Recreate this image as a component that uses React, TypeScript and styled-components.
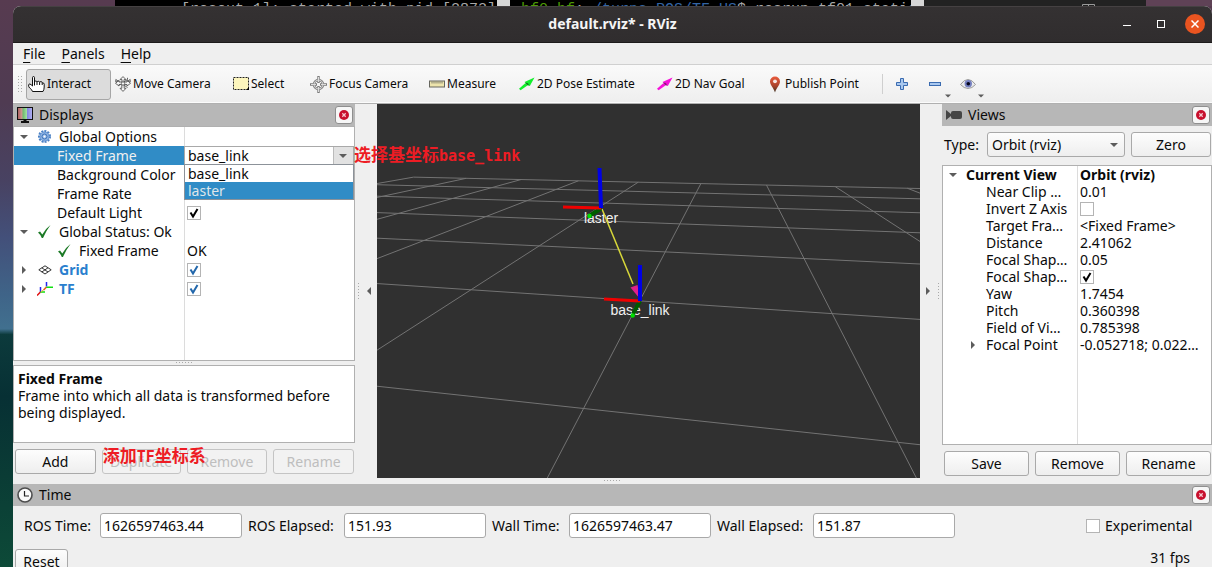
import React from "react";
import styled, { createGlobalStyle, css } from "styled-components";

const colors = {
  panel: "#efefef",
  header: "#b7b7b7",
  line: "#b0b0b0",
  split: "#dcdcdc",
  accent: "#308cc6",
  link: "#2a7fce",
  canvas: "#303030",
};

const GlobalStyle = createGlobalStyle`
  * { box-sizing: border-box; }
  body {
    margin: 0;
    overflow: hidden;
    color: #0a0a0a;
    font: 14px/18px "Noto Sans", "Noto Sans CJK SC", sans-serif;
  }
  button, input, select { font: inherit; color: inherit; }
  svg { display: block; flex: none; }
`;

/* ---------- desktop and window frame ---------- */

const Desktop = styled.div`
  height: 100vh;
  overflow: hidden;
  padding-left: 13px;
  background: linear-gradient(
    180deg,
    #573b50 0%,
    #4f3b52 18%,
    #484262 32%,
    #43507a 42%,
    #3f6488 52%,
    #41708f 58%,
    #0c3a3c 59%,
    #073034 70%,
    #0a3c35 84%,
    #0d4a38 100%
  );
`;

const Backdrop = styled.div`
  display: flex;
  height: 6px;
  padding-right: 66px;
  margin-left: 102px;
  background: linear-gradient(270deg, #5f4256 0 66px, transparent 66px);
`;

const Terminal = styled.div<{ $grow: number; $indent: number }>`
  flex: ${(p) => p.$grow} 1 0;
  min-width: 0;
  text-indent: ${(p) => p.$indent}px;
  overflow: hidden;
  white-space: pre;
  background: #000;
  color: #a8a8a8;
  font: 15px/20px "Liberation Mono", monospace;
`;

const Prompt = styled.span`
  color: #4e9a06;
`;

const Path = styled.span`
  color: #3465a4;
`;

const ScrollTrack = styled.div`
  width: 13px;
  background: #d6d6d6;
`;

const DarkStrip = styled.div`
  width: 222px;
  padding: 4px 0 0 158px;
  background: #222;
`;

const Window = styled.main`
  display: flex;
  flex-direction: column;
  height: calc(100vh + 1px);
  overflow: hidden;
  border-radius: 8px 8px 0 0;
  background: ${colors.panel};
`;

const TitleBar = styled.header`
  display: grid;
  grid-template-columns: 1fr auto 1fr;
  align-items: center;
  height: 37px;
  flex: none;
  background: linear-gradient(#454142 0 1px, #343132 1px, #302d2e);
  border-bottom: 1px solid #1d1b1b;
  color: #f5f5f5;
`;

const Title = styled.h1`
  grid-column: 2;
  margin: 0;
  font-size: 14px;
  font-weight: 700;
`;

const WindowControls = styled.div`
  display: flex;
  justify-content: flex-end;
  align-items: center;
  gap: 14px;
  padding-right: 7px;
`;

const WindowButton = styled.button<{ $close?: boolean }>`
  display: grid;
  place-items: center;
  width: 20px;
  height: 20px;
  padding: 0;
  border: 0;
  border-radius: 50%;
  background: ${(p) => (p.$close ? "#e95420" : "transparent")};
  color: #fff;
`;

const MenuBar = styled.nav`
  display: flex;
  align-items: center;
  gap: 16px;
  height: 22px;
  flex: none;
  padding-left: 10px;
  border-bottom: 1px solid #d0d0d0;
`;

const MenuButton = styled.button`
  padding: 0;
  border: 0;
  background: none;
  u {
    text-underline-offset: 3px;
    text-decoration-thickness: 1px;
  }
`;

const ToolBar = styled.div`
  display: flex;
  align-items: center;
  gap: 2px;
  height: 39px;
  flex: none;
  padding-left: 5px;
  background: linear-gradient(#fafafa, #eeeeee);
  border-bottom: 1px solid ${colors.line};
  box-shadow: inset 0 -1px 0 #fbfbfb;
  font-size: 12px;
`;

const ToolButton = styled.button<{ $width: number; $active?: boolean }>`
  display: flex;
  align-items: center;
  gap: 2px;
  width: ${(p) => p.$width}px;
  height: 31px;
  flex: none;
  padding: 0 0 0 1px;
  border: 1px solid ${(p) => (p.$active ? "#a6a6a6" : "transparent")};
  border-radius: 3px;
  background: ${(p) => (p.$active ? "#dcdcdc" : "transparent")};
  white-space: nowrap;
`;

const GripSlot = styled.div`
  width: 6px;
`;

const ToolDivider = styled.div`
  width: 1px;
  height: 20px;
  margin-right: 7px;
  background: #cfcfcf;
`;

/* ---------- docks ---------- */

const Docks = styled.div`
  display: flex;
  flex: 1;
  min-height: 0;
`;

const Dock = styled.section<{ $width: number }>`
  display: flex;
  flex-direction: column;
  width: ${(p) => p.$width}px;
  flex: none;
`;

const DockHeader = styled.div`
  display: flex;
  align-items: center;
  gap: 6px;
  height: 22px;
  flex: none;
  padding: 0 2px 0 4px;
  background: ${colors.header};
`;

const DockTitle = styled.h2`
  flex: 1;
  margin: 0;
  font-size: 14px;
  font-weight: 400;
`;

const CloseButton = styled.button`
  display: grid;
  place-items: center;
  width: 18px;
  height: 18px;
  padding: 0;
  border: 1px solid #8e8e8e;
  border-radius: 3px;
  background: #f6f6f6;
`;

const Button = styled.button`
  flex: 1 1 0;
  width: 100%;
  min-width: 0;
  height: 25px;
  padding: 0;
  border: 1px solid #a9a9a9;
  border-radius: 3px;
  background: linear-gradient(#fdfdfd, #eeeeee);
  &:disabled {
    border-color: #c4c4c4;
    background: #f2f2f2;
    color: #bebebe;
  }
`;

const ButtonRow = styled.div<{ $bottom: number }>`
  display: flex;
  gap: 6px;
  padding: 6px 1px ${(p) => p.$bottom}px 2px;
`;

const ButtonSlot = styled.div`
  position: relative;
  display: flex;
  flex: 1 1 0;
`;

const Splitter = styled.div<{ $flip?: boolean }>`
  display: flex;
  flex-direction: ${(p) => (p.$flip ? "row-reverse" : "row")};
  align-items: center;
  justify-content: space-between;
  width: 22px;
  flex: none;
  padding: 0 ${(p) => (p.$flip ? 2 : 4)}px 0 ${(p) => (p.$flip ? 4 : 3)}px;
`;

const HandleRow = styled.div<{ $height: number }>`
  display: grid;
  place-items: center;
  height: ${(p) => p.$height}px;
  flex: none;
`;

const TreeBox = styled.div<{ $split: number }>`
  flex: 1;
  min-height: 0;
  border: 1px solid ${colors.line};
  background: linear-gradient(${colors.split}, ${colors.split})
    ${(p) => p.$split}px 0 / 1px 100% no-repeat #fff;
`;

const Tree = styled.table<{ $split: number; $row: number }>`
  width: 100%;
  table-layout: fixed;
  border-collapse: collapse;
  th {
    width: ${(p) => p.$split}px;
    font-weight: inherit;
    text-align: left;
  }
  th, td {
    height: ${(p) => p.$row}px;
    padding: 0;
    white-space: nowrap;
    line-height: 17px;
  }
  td {
    position: relative;
    padding-left: 3px;
  }
`;

const TreeRow = styled.tr<{ $bold?: boolean; $link?: boolean; $selected?: boolean }>`
  ${(p) => p.$bold && css`font-weight: 700;`}
  ${(p) => p.$link && css`color: ${colors.link}; font-weight: 700;`}
  ${(p) => p.$selected && css`th { background: ${colors.accent}; color: #f0f0f0; }`}
`;

const Name = styled.div<{ $indent: number; $gap?: number }>`
  display: flex;
  align-items: center;
  gap: ${(p) => p.$gap ?? 8}px;
  padding-left: ${(p) => p.$indent}px;
`;

const Combo = styled.span`
  position: relative;
  display: flex;
  align-items: center;
  svg {
    position: absolute;
    right: 7px;
    pointer-events: none;
  }
`;

const CellSelect = styled.select`
  appearance: none;
  width: 100%;
  height: 19px;
  padding: 0 20px 0 3px;
  border: 1px solid #a9a9a9;
  border-radius: 0;
  background: linear-gradient(90deg, #bbb, #bbb) right 19px top 0 / 1px 100% no-repeat,
    linear-gradient(#e2e2e2, #e2e2e2) right 0 top 0 / 19px 100% no-repeat, #fff;
  line-height: 17px;
`;

const EditorCell = styled.td`
  &&& { padding: 0; }
`;

const Popup = styled.ul`
  position: absolute;
  z-index: 3;
  top: calc(100% - 1px);
  left: 0;
  right: 0;
  margin: 0;
  padding: 0;
  border: 1px solid #8c9299;
  background: #fff;
  list-style: none;
`;

const Option = styled.li<{ $active?: boolean }>`
  height: 17px;
  padding-left: 3px;
  line-height: 17px;
  background: ${(p) => (p.$active ? colors.accent : "#fff")};
  color: ${(p) => (p.$active ? "#dfe6ea" : "inherit")};
`;

const Note = styled.span<{ $over?: boolean }>`
  position: absolute;
  z-index: 4;
  top: ${(p) => (p.$over ? "-5px" : "-3px")};
  left: ${(p) => (p.$over ? "1px" : "100%")};
  color: #ed1c24;
  font: 600 17px/22px "Noto Sans CJK SC", sans-serif;
  white-space: nowrap;
  pointer-events: none;
  b {
    font: 700 15px/20px "DejaVu Sans Mono", monospace;
  }
`;

const Description = styled.div`
  height: 78px;
  flex: none;
  padding: 4px;
  border: 1px solid ${colors.line};
  background: #fff;
  line-height: 17px;
  p, h3 {
    margin: 0;
    font-size: 14px;
  }
`;

const TypeRow = styled.div`
  display: flex;
  align-items: center;
  gap: 6px;
  padding: 6px 1px 8px 2px;
`;

const TypeLabel = styled.label`
  width: 37px;
`;

const TypeCombo = styled(Combo)`
  width: 138px;
`;

const TypeSelect = styled.select`
  appearance: none;
  width: 100%;
  height: 25px;
  padding: 0 20px 0 4px;
  border: 1px solid #a9a9a9;
  border-radius: 3px;
  background: linear-gradient(#fdfdfd, #eeeeee);
`;

const Canvas = styled.div`
  flex: 1;
  min-width: 0;
  background: ${colors.canvas};
  overflow: hidden;
  svg {
    width: 100%;
    height: 100%;
  }
`;

/* ---------- check box ---------- */

const CheckBox = styled.span<{ $link?: boolean }>`
  display: grid;
  width: 14px;
  color: ${(p) => (p.$link ? "#2267ab" : "#000")};
  > * { grid-area: 1 / 1; }
  svg { pointer-events: none; }
`;

const CheckInput = styled.input`
  appearance: none;
  width: 14px;
  height: 14px;
  margin: 0;
  border: 1px solid #b4b4b4;
  background: #fff;
`;

/* ---------- time panel ---------- */

const TimeRow = styled.div`
  display: flex;
  align-items: center;
  gap: 6px;
  padding: 7px 16px 11px 11px;
`;

const TimeLabel = styled.label<{ $width: number }>`
  width: ${(p) => p.$width}px;
  flex: none;
  white-space: nowrap;
`;

const TimeField = styled.input`
  width: 142px;
  height: 25px;
  padding: 0 3px;
  border: 1px solid #a9a9a9;
  border-radius: 3px;
  background: #fff;
`;

const Experimental = styled.label`
  display: flex;
  align-items: center;
  gap: 5px;
  width: 110px;
  margin-left: auto;
`;

const StatusRow = styled.div`
  display: flex;
  justify-content: space-between;
  height: 25px;
  padding: 0 22px 0 2px;
`;

const ResetSlot = styled.div`
  width: 53px;
`;

/* ---------- icons ---------- */

const Arrow = ({ dir = "down" }: { dir?: "down" | "right" | "left" }) => {
  const d = { down: "M0 2h8L4 6z", right: "M2 0v8l4-4z", left: "M6 0v8L2 4z" }[dir];
  return (
    <svg width="8" height="8" viewBox="0 0 8 8" fill="#5c5c5c"><path d={d} /></svg>
  );
};

const Dots = ({ cols, rows }: { cols: number; rows: number }) => (
  <svg width={cols * 3 - 1} height={rows * 3 - 1} fill="#a9a9a9" shapeRendering="crispEdges">
    {Array.from({ length: cols * rows }, (_, i) => (
      <rect key={i} x={(i % cols) * 3} y={Math.floor(i / cols) * 3} width="1" height="1" />
    ))}
  </svg>
);

const HandIcon = () => (
  <svg width="17" height="17" viewBox="0 0 17 17" fill="#fff" stroke="#111" strokeLinejoin="round">
    <path d="M4.500 10V1.700q0-1.200 1-1.200t1 1.200V6q0-1 1.200-1t1.300 1.200q0-.9 1.300-.9t1.300 1.200q0-.9 1.300-.9t1.300 1.200q1.800-.3 2 1.400V11q0 2.500-1.200 4.500H4.500Q4 13.500 1.700 12 .5 11 .6 9 .7 8 1.700 8q1.300.2 2.800 2z" />
    <path d="M6.500 6v3.500M9 6.200V9M11.600 6.500V9M14.200 7V9" />
  </svg>
);

const MoveIcon = () => (
  <svg width="16" height="16" viewBox="0 0 16 16" fill="#f7f7f7" stroke="#555" strokeWidth=".9">
    <path d="M3.500 9.500L12.500 3.500V1.800M3.500 5.500L12.500 11.500" fill="none" />
    <path d="M8 .6L11 3.600H9V6h3V4.300L15.500 7.300 12 10V8.500H9.200V12.300H11L8 15.400 5 12.300h1.800V8.500H4V10L.5 7.300 4 4.300V6h3V3.600H5z" />
    <path d="M.8 3.500v2.500l2.700-.8zM15.200 3.500V6l-2.700-.8z" />
    <circle cx="8" cy="7.500" r="1.700" />
  </svg>
);

const SelectIcon = () => (
  <svg width="16" height="16" viewBox="0 0 16 16">
    <rect x=".5" y="1.500" width="15" height="12" fill="#fdf6bd" stroke="#222" strokeDasharray="2 1" />
    <path d="M16 11v3h-3z" fill="#000" />
  </svg>
);

const FocusIcon = () => (
  <svg width="17" height="17" viewBox="0 0 17 17" fill="none">
    <circle cx="8.500" cy="8.500" r="4.500" stroke="#7b7b7b" strokeWidth="2.400" />
    <path d="M8.500 0v7M8.500 10v7M0 8.500h7M10 8.500h7" stroke="#7b7b7b" strokeWidth="2.400" />
    <circle cx="8.500" cy="8.500" r="4.500" stroke="#dcdcdc" />
    <path d="M8.500 1v5M8.500 11v5M1 8.500h5M11 8.500h5" stroke="#dcdcdc" />
  </svg>
);

const RulerIcon = () => (
  <svg width="16" height="16" viewBox="0 0 16 16">
    <rect x=".5" y="5" width="15" height="6" fill="#ede4ac" stroke="#66665e" />
    <path d="M3 5.500v2M5 5.500v2M7 5.500v2M9 5.500v2M11 5.500v2M13 5.500v2" stroke="#66665e" strokeWidth=".8" />
  </svg>
);

const PoseArrow = ({ color, dark }: { color: string; dark: string }) => (
  <svg width="16" height="16" viewBox="0 0 16 16">
    <path d="M0 12.700L6.200 7.200 8.800 9.300 1.600 14.300z" fill={color} />
    <path d="M15.500 1.500L5.500 6l5.300 4z" fill={color} />
    <path d="M5.800 6.500l3 .5L10.500 9.800 8 9z" fill={dark} />
  </svg>
);

const PinIcon = () => (
  <svg width="16" height="17" viewBox="0 0 16 17">
    <defs>
      <linearGradient id="pin" x2="0" y2="1">
        <stop offset="0" stopColor="#ea5a3c" />
        <stop offset=".6" stopColor="#a8432c" />
        <stop offset="1" stopColor="#3a3222" />
      </linearGradient>
    </defs>
    <path d="M8 .5a5 5 0 0 1 5 5c0 3.500-3.500 6-5 11-1.500-5-5-7.500-5-11a5 5 0 0 1 5-5z" fill="url(#pin)" />
    <circle cx="8" cy="5.300" r="1.900" fill="#f4e6e2" />
  </svg>
);

const PlusIcon = () => (
  <svg width="16" height="16" viewBox="0 0 16 16">
    <path d="M6.500 2.500h3v4h4v3h-4v4h-3v-4h-4v-3h4z" fill="#a9c8ef" stroke="#3a6bb0" />
  </svg>
);

const MinusIcon = () => (
  <svg width="16" height="16" viewBox="0 0 16 16">
    <rect x="2.500" y="6.500" width="11" height="3" fill="#a9c8ef" stroke="#3a6bb0" />
  </svg>
);

const EyeIcon = () => (
  <svg width="16" height="16" viewBox="0 0 16 16">
    <path d="M.5 8.500Q4 3.500 8 3.500t7.500 5Q12 12.500 8 12.500T.5 8.500z" fill="#ececec" stroke="#9a9a9a" />
    <circle cx="8.300" cy="7.800" r="3.700" fill="#7580c0" />
    <circle cx="8.300" cy="7.800" r="1.800" fill="#05051a" />
  </svg>
);

const MenuMark = styled.span`
  align-self: flex-end;
  svg { width: 6px; height: 6px; }
`;

const MonitorIcon = () => (
  <svg width="16" height="16" viewBox="0 0 16 16">
    <defs>
      <linearGradient id="screen" x2="1" y2="0">
        <stop offset="0" stopColor="#a85a5a" />
        <stop offset=".3" stopColor="#cf9a92" />
        <stop offset=".36" stopColor="#6cb86c" />
        <stop offset=".62" stopColor="#a2e0a2" />
        <stop offset=".66" stopColor="#8484e0" />
        <stop offset="1" stopColor="#b4b4f4" />
      </linearGradient>
    </defs>
    <rect x=".5" y=".5" width="15" height="12" fill="url(#screen)" stroke="#111" />
    <path d="M6.500 13h3v1h2.500v2H4v-2h2.500z" fill="#111" />
  </svg>
);

const CameraIcon = () => (
  <svg width="16" height="10" viewBox="0 0 16 10" fill="#454545">
    <rect x="5" y="1" width="11" height="8" rx="2" />
    <path d="M0 0l5 4v2l-5 4z" />
  </svg>
);

const ClockIcon = () => (
  <svg width="16" height="16" viewBox="0 0 16 16" fill="none">
    <circle cx="8" cy="8" r="7" fill="#fafafa" stroke="#4e4e4e" strokeWidth="1.600" />
    <path d="M7.500 4v5H12" stroke="#222" strokeWidth="1.200" />
  </svg>
);

const RedCross = () => (
  <svg width="12" height="12" viewBox="0 0 12 12">
    <circle cx="6" cy="6" r="5" fill="#c8102e" />
    <path d="M4.300 4.300l3.400 3.400M7.700 4.300L4.300 7.700" stroke="#f3c8cf" strokeWidth="1.300" />
  </svg>
);

const GearIcon = () => (
  <svg width="13" height="13" viewBox="0 0 13 13" fill="none" stroke="#3c72b8">
    <circle cx="6.500" cy="6.500" r="5.500" stroke="#4a80c4" strokeWidth="2" strokeDasharray="2 1.140" />
    <circle cx="6.500" cy="6.500" r="4.500" fill="#8fb4e4" stroke="#5f92d2" />
    <circle cx="6.500" cy="6.500" r="2.500" fill="#9dbfea" />
    <circle cx="6.500" cy="6.500" r="1" fill="#fff" stroke="none" />
  </svg>
);

const StatusOk = () => (
  <svg width="13" height="13" viewBox="0 0 13 13" fill="#1c7a26">
    <path d="M0 7.500L2 6.500 4.300 9.500Q7 4 12.500 0 8 6 5 13H3.800Q2.500 9.500 0 7.500z" />
  </svg>
);

const GridIcon = () => (
  <svg width="14" height="10" viewBox="0 0 14 10" fill="none" stroke="#333">
    <path d="M.8 4.800L7 .8l6.200 4L7 9zM3.800 2.800L10 7M10 2.800L3.800 7" />
  </svg>
);

const TfIcon = () => (
  <svg width="16" height="14" viewBox="0 0 16 14" fill="none" strokeWidth="1.500">
    <path d="M3.500 10V5M9.500 4.500V0" stroke="#2424f0" />
    <path d="M3.500 10L0 13.500M9.500 5L6.500 8" stroke="#e01010" />
    <path d="M3.500 10H8M9.500 5.200H16" stroke="#10e010" />
    <path d="M4 10L9 5.500" stroke="#f0b030" strokeWidth="1" />
  </svg>
);

const Check = ({ checked, link, label, id }: { checked?: boolean; link?: boolean; label?: string; id?: string }) => (
  <CheckBox $link={link}>
    <CheckInput type="checkbox" defaultChecked={checked} aria-label={label} id={id} />
    {checked && (
      <svg width="14" height="14" viewBox="0 0 14 14" fill="none" stroke="currentColor" strokeWidth="2">
        <path d="M3.500 6.500L6 10.500 10.500 3" />
      </svg>
    )}
  </CheckBox>
);

/* ---------- 3D scene ---------- */

type Vec = [number, number, number];
const dot = (a: Vec, b: Vec) => a[0] * b[0] + a[1] * b[1] + a[2] * b[2];

const SCENE = { width: 543, height: 374 };
const YAW = 1.7454;
const PITCH = 0.360398;
const DISTANCE = 2.41062;
const FOCAL: Vec = [-0.052718, 0.022, 0.0694];
const SCALE = SCENE.height / 2 / Math.tan(0.785398 / 2);

const back: Vec = [Math.cos(YAW) * Math.cos(PITCH), Math.sin(YAW) * Math.cos(PITCH), Math.sin(PITCH)];
const right: Vec = [-Math.sin(YAW), Math.cos(YAW), 0];
const up: Vec = [-Math.cos(YAW) * Math.sin(PITCH), -Math.sin(YAW) * Math.sin(PITCH), Math.cos(PITCH)];
const eye = FOCAL.map((f, i) => f + DISTANCE * back[i]) as Vec;

const toCamera = (p: Vec): Vec => {
  const v = p.map((c, i) => c - eye[i]) as Vec;
  return [dot(v, right), dot(v, up), -dot(v, back)];
};

/* Projects a ground segment, cutting it at the near plane. */
const projectLine = (a: Vec, b: Vec) => {
  const near = 0.1;
  let p = toCamera(a);
  let q = toCamera(b);
  if (p[2] < near && q[2] < near) return null;
  const cut = (from: Vec, to: Vec): Vec => {
    const t = (near - from[2]) / (to[2] - from[2]);
    return from.map((c, i) => c + (to[i] - c) * t) as Vec;
  };
  if (p[2] < near) p = cut(p, q);
  if (q[2] < near) q = cut(q, p);
  const flat = (v: Vec) => [
    SCENE.width / 2 + (v[0] / v[2]) * SCALE,
    SCENE.height / 2 - (v[1] / v[2]) * SCALE,
  ];
  return [...flat(p), ...flat(q)];
};

const gridLines = Array.from({ length: 11 }, (_, i) => i - 5)
  .flatMap((n) => [projectLine([n, -5, 0], [n, 5, 0]), projectLine([-5, n, 0], [5, n, 0])])
  .filter((l): l is number[] => l !== null);

const Scene = () => (
  <svg viewBox={`0 0 ${SCENE.width} ${SCENE.height}`} preserveAspectRatio="xMidYMid slice">
    <g stroke="#737373">
      {gridLines.map(([x1, y1, x2, y2], i) => (
        <line key={i} x1={x1} y1={y1} x2={x2} y2={y2} />
      ))}
    </g>
    <g fill="#f0f0f0" fontFamily="Liberation Sans, sans-serif" fontSize="14" textAnchor="middle">
      <text x="224" y="119">laster</text>
      <text x="263" y="211">base_link</text>
    </g>
    <g strokeWidth="3">
      <path d="M225 105L256 180" stroke="#d8d83a" strokeWidth="1.500" />
      <path d="M253.500 183.500l7-2.500 2.500 14z" fill="#e0208c" />
      <path d="M224 104.500L212 112" stroke="#005c00" strokeWidth="4" />
      <path d="M263 197L256 210" stroke="#005c00" strokeWidth="4" />
      <circle cx="212.500" cy="112" r="2.200" fill="#00e000" />
      <circle cx="255.700" cy="211.500" r="2.200" fill="#00e000" />
      <path d="M186 103L224 104M227 195L263 197" stroke="#f00000" />
      <path d="M222.500 64L224 104M263 161V197" stroke="#0000e6" strokeWidth="4" />
    </g>
  </svg>
);

/* ---------- panels ---------- */

const tools = [
  { label: "Interact", icon: <HandIcon />, width: 85 },
  { label: "Move Camera", icon: <MoveIcon />, width: 116 },
  { label: "Select", icon: <SelectIcon />, width: 75 },
  { label: "Focus Camera", icon: <FocusIcon />, width: 117 },
  { label: "Measure", icon: <RulerIcon />, width: 88 },
  { label: "2D Pose Estimate", icon: <PoseArrow color="#12f02c" dark="#0a8a1c" />, width: 136 },
  { label: "2D Nav Goal", icon: <PoseArrow color="#f512d8" dark="#96107f" />, width: 108 },
  { label: "Publish Point", icon: <PinIcon />, width: 115 },
];

const Header = ({ title, icon }: { title: string; icon: React.ReactNode }) => (
  <DockHeader>
    {icon}
    <DockTitle>{title}</DockTitle>
    <CloseButton aria-label={`Close ${title}`}><RedCross /></CloseButton>
  </DockHeader>
);

const Displays = () => (
  <Dock $width={342}>
    <Header title="Displays" icon={<MonitorIcon />} />
    <TreeBox $split={170}>
      <Tree $split={170} $row={19}>
        <tbody>
          <TreeRow>
            <th><Name $indent={6}><Arrow /><Name $indent={2}><GearIcon />Global Options</Name></Name></th>
            <td />
          </TreeRow>
          <TreeRow $selected>
            <th><Name $indent={43}>Fixed Frame</Name></th>
            <EditorCell>
              <Combo>
                <CellSelect aria-label="Fixed Frame" defaultValue="base_link">
                  <option>base_link</option>
                  <option>laster</option>
                </CellSelect>
                <Arrow />
              </Combo>
              <Popup role="listbox" aria-label="Frames">
                <Option role="option" aria-selected="false">base_link</Option>
                <Option role="option" aria-selected="true" $active>laster</Option>
              </Popup>
              <Note>选择基坐标<b>base_link</b></Note>
            </EditorCell>
          </TreeRow>
          <TreeRow><th><Name $indent={43}>Background Color</Name></th><td /></TreeRow>
          <TreeRow><th><Name $indent={43}>Frame Rate</Name></th><td /></TreeRow>
          <TreeRow>
            <th><Name $indent={43}>Default Light</Name></th>
            <td><Check checked label="Default Light" /></td>
          </TreeRow>
          <TreeRow>
            <th><Name $indent={6}><Arrow /><Name $indent={2}><StatusOk />Global Status: Ok</Name></Name></th>
            <td />
          </TreeRow>
          <TreeRow>
            <th><Name $indent={44}><StatusOk />Fixed Frame</Name></th>
            <td>OK</td>
          </TreeRow>
          <TreeRow $link>
            <th><Name $indent={6}><Arrow dir="right" /><Name $indent={2} $gap={7}><GridIcon />Grid</Name></Name></th>
            <td><Check checked link label="Grid" /></td>
          </TreeRow>
          <TreeRow $link>
            <th><Name $indent={6}><Arrow dir="right" /><Name $indent={1} $gap={6}><TfIcon />TF</Name></Name></th>
            <td><Check checked link label="TF" /></td>
          </TreeRow>
        </tbody>
      </Tree>
    </TreeBox>
    <HandleRow $height={4}><Dots cols={6} rows={1} /></HandleRow>
    <Description>
      <h3>Fixed Frame</h3>
      <p>Frame into which all data is transformed before being displayed.</p>
    </Description>
    <ButtonRow $bottom={4}>
      <Button>Add</Button>
      <ButtonSlot>
        <Button disabled>Duplicate</Button>
        <Note $over>添加<b>TF</b>坐标系</Note>
      </ButtonSlot>
      <Button disabled>Remove</Button>
      <Button disabled>Rename</Button>
    </ButtonRow>
  </Dock>
);

const viewProps: [string, React.ReactNode][] = [
  ["Near Clip …", "0.01"],
  ["Invert Z Axis", <Check label="Invert Z Axis" />],
  ["Target Fra…", "<Fixed Frame>"],
  ["Distance", "2.41062"],
  ["Focal Shap…", "0.05"],
  ["Focal Shap…", <Check checked label="Focal Shape Fixed Size" />],
  ["Yaw", "1.7454"],
  ["Pitch", "0.360398"],
  ["Field of Vi…", "0.785398"],
];

const Views = () => (
  <Dock $width={270}>
    <Header title="Views" icon={<CameraIcon />} />
    <TypeRow>
      <TypeLabel htmlFor="view-type">Type:</TypeLabel>
      <TypeCombo>
        <TypeSelect id="view-type" defaultValue="Orbit (rviz)">
          <option>Orbit (rviz)</option>
        </TypeSelect>
        <Arrow />
      </TypeCombo>
      <Button>Zero</Button>
    </TypeRow>
    <TreeBox $split={134}>
      <Tree $split={134} $row={17}>
        <tbody>
          <TreeRow $bold>
            <th><Name $indent={6} $gap={9}><Arrow />Current View</Name></th>
            <td>Orbit (rviz)</td>
          </TreeRow>
          {viewProps.map(([name, value], i) => (
            <TreeRow key={i}>
              <th><Name $indent={43}>{name}</Name></th>
              <td>{value}</td>
            </TreeRow>
          ))}
          <TreeRow>
            <th><Name $indent={26} $gap={9}><Arrow dir="right" />Focal Point</Name></th>
            <td>-0.052718; 0.022…</td>
          </TreeRow>
        </tbody>
      </Tree>
    </TreeBox>
    <ButtonRow $bottom={2}>
      <Button>Save</Button>
      <Button>Remove</Button>
      <Button>Rename</Button>
    </ButtonRow>
  </Dock>
);

const times = [
  { id: "ros-time", label: "ROS Time:", value: "1626597463.44", width: 70 },
  { id: "ros-elapsed", label: "ROS Elapsed:", value: "151.93", width: 90 },
  { id: "wall-time", label: "Wall Time:", value: "1626597463.47", width: 71 },
  { id: "wall-elapsed", label: "Wall Elapsed:", value: "151.87", width: 90 },
];

const TimePanel = () => (
  <section>
    <Header title="Time" icon={<ClockIcon />} />
    <TimeRow>
      {times.map((t) => (
        <React.Fragment key={t.id}>
          <TimeLabel htmlFor={t.id} $width={t.width}>{t.label}</TimeLabel>
          <TimeField id={t.id} defaultValue={t.value} />
        </React.Fragment>
      ))}
      <Experimental htmlFor="experimental">
        <Check id="experimental" />
        Experimental
      </Experimental>
    </TimeRow>
    <StatusRow>
      <ResetSlot><Button>Reset</Button></ResetSlot>
      <span>31 fps</span>
    </StatusRow>
  </section>
);

export default function App() {
  return (
    <Desktop>
      <GlobalStyle />
      <Backdrop aria-hidden="true">
        <Terminal $grow={382} $indent={66}>[rosout-1]: started with pid [2873]</Terminal>
        <ScrollTrack />
        <Terminal $grow={401} $indent={11}>
          <Prompt>hf0_hf</Prompt>:~<Path>/turns_ROS/TF_US</Path>$ rosrun tf01_static
        </Terminal>
        <ScrollTrack />
        <DarkStrip>
          <svg width="13" height="6" fill="none" stroke="#9a9a9a"><path d="M.5 6V.5h12V6M6.500 0v6" /></svg>
        </DarkStrip>
      </Backdrop>
      <Window>
        <TitleBar>
          <Title>default.rviz* - RViz</Title>
          <WindowControls>
            <WindowButton aria-label="Minimize">
              <svg width="8" height="8"><rect y="5" width="8" height="1" fill="#fff" /></svg>
            </WindowButton>
            <WindowButton aria-label="Maximize">
              <svg width="8" height="8" fill="none" stroke="#fff"><rect x=".5" y=".5" width="7" height="7" /></svg>
            </WindowButton>
            <WindowButton aria-label="Close" $close>
              <svg width="8" height="8" stroke="#fff" strokeWidth="1.500"><path d="M.5 .5l7 7M7.500 .5l-7 7" /></svg>
            </WindowButton>
          </WindowControls>
        </TitleBar>
        <MenuBar>
          <MenuButton><u>F</u>ile</MenuButton>
          <MenuButton><u>P</u>anels</MenuButton>
          <MenuButton><u>H</u>elp</MenuButton>
        </MenuBar>
        <ToolBar>
          <GripSlot><Dots cols={2} rows={6} /></GripSlot>
          {tools.map((t, i) => (
            <ToolButton key={t.label} $width={t.width} $active={i === 0}>
              {t.icon}
              {t.label}
            </ToolButton>
          ))}
          <ToolDivider />
          <ToolButton $width={31} aria-label="Add tool"><PlusIcon /></ToolButton>
          <ToolButton $width={31} aria-label="Remove tool">
            <MinusIcon />
            <MenuMark><Arrow /></MenuMark>
          </ToolButton>
          <ToolButton $width={31} aria-label="Tool visibility">
            <EyeIcon />
            <MenuMark><Arrow /></MenuMark>
          </ToolButton>
        </ToolBar>
        <Docks>
          <Displays />
          <Splitter><Dots cols={1} rows={6} /><Arrow dir="left" /></Splitter>
          <Canvas><Scene /></Canvas>
          <Splitter $flip><Dots cols={1} rows={6} /><Arrow dir="right" /></Splitter>
          <Views />
        </Docks>
        <HandleRow $height={6}><Dots cols={6} rows={1} /></HandleRow>
        <TimePanel />
      </Window>
    </Desktop>
  );
}
